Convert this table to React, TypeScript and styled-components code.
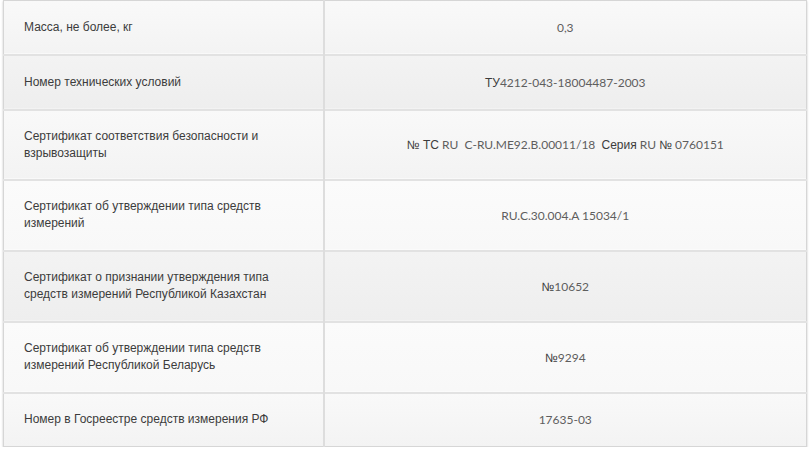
import React from "react";
import styled, { createGlobalStyle } from "styled-components";

const Global = createGlobalStyle`
  html, body { margin: 0; padding: 0; background: #ffffff; }
  body { font-family: "Liberation Sans", Arial, sans-serif; }
`;

const Wrap = styled.div`
  padding: 0 5px 0 3px;
`;

const Table = styled.table`
  width: 804px;
  table-layout: fixed;
  border-collapse: collapse;
  border: 1px solid #d6d6d6;
  box-shadow: 0 1px 2px rgba(0, 0, 0, 0.22);
`;

const LabelCol = styled.col`
  width: 320px;
`;

const Row = styled.tr<{ $tone: "light" | "mid" | "dark" }>`
  background: ${(p) =>
    p.$tone === "light"
      ? "linear-gradient(#fbfbfb, #f8f8f8)"
      : p.$tone === "mid"
      ? "linear-gradient(#f9f9f9, #f3f3f3)"
      : "linear-gradient(#f3f3f3, #eeeeee)"};
  border-bottom: 2px solid #e2e2e2;
  &:last-child { border-bottom: none; }
`;

const Label = styled.td<{ $h: number }>`
  height: ${(p) => p.$h}px;
  padding: 0 20px;
  box-sizing: border-box;
  font-family: "Liberation Sans", Arial, sans-serif;
  font-size: 12px;
  line-height: 17px;
  color: #3c3c3c;
  border-right: 2px solid #dddddd;
  vertical-align: middle;
`;

const Value = styled.td`
  text-align: center;
  font-family: Lato, "Liberation Sans", Arial, sans-serif;
  font-size: 12px;
  color: #5e5e5e;
  vertical-align: middle;
`;

const Cyr = styled.span`
  font-family: "Liberation Sans", Arial, sans-serif;
  color: #3c3c3c;
`;

const rows: { label: string; value: React.ReactNode; h: number; tone: "light" | "mid" | "dark" }[] = [
  { label: "Масса, не более, кг", value: "0,3", h: 54, tone: "mid" },
  { label: "Номер технических условий", value: (<><Cyr>ТУ</Cyr>4212-043-18004487-2003</>), h: 55, tone: "dark" },
  {
    label: "Сертификат соответствия безопасности и взрывозащиты",
    value: (
      <>
        <Cyr>№ ТС</Cyr> RU&nbsp; C-RU.ME92.B.00011/18&nbsp; <Cyr>Серия</Cyr> RU <Cyr>№</Cyr> 0760151
      </>
    ),
    h: 70,
    tone: "mid",
  },
  { label: "Сертификат об утверждении типа средств измерений", value: "RU.C.30.004.A 15034/1", h: 71, tone: "light" },
  {
    label: "Сертификат о признании утверждения типа средств измерений Республикой Казахстан",
    value: (<><Cyr>№</Cyr>10652</>),
    h: 71,
    tone: "dark",
  },
  {
    label: "Сертификат об утверждении типа средств измерений Республикой Беларусь",
    value: (<><Cyr>№</Cyr>9294</>),
    h: 71,
    tone: "light",
  },
  { label: "Номер в Госреестре средств измерения РФ", value: "17635-03", h: 54, tone: "mid" },
];

export default function App() {
  return (
    <>
      <Global />
      <Wrap>
        <Table>
          <colgroup>
            <LabelCol />
            <col />
          </colgroup>
          <tbody>
            {rows.map((r, i) => (
              <Row key={i} $tone={r.tone}>
                <Label $h={r.h}>{r.label}</Label>
                <Value>{r.value}</Value>
              </Row>
            ))}
          </tbody>
        </Table>
      </Wrap>
    </>
  );
}
